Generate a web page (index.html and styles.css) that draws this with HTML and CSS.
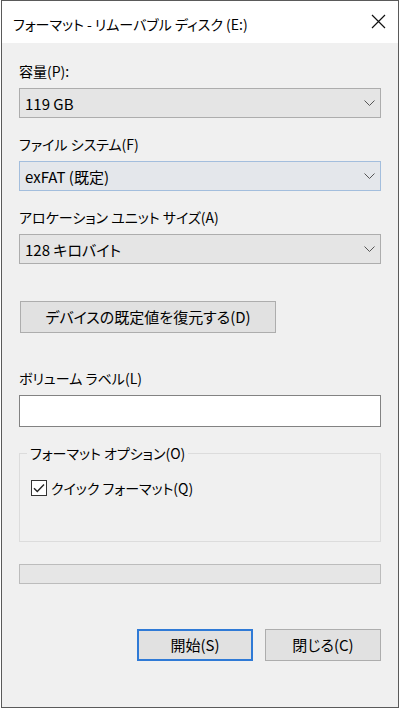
FILE: index.html
```html
<!DOCTYPE html>
<html lang="ja">
<head>
    <meta charset="utf-8">
    <title>フォーマット - リムーバブル ディスク (E:)</title>
    <link rel="stylesheet" href="styles.css">
</head>
<body>
    <div class="window">
        <div class="titlebar">
            <span class="title">フォーマット - リムーバブル ディスク (E:)</span>
            <svg class="close" width="15" height="15" viewBox="0 0 15 15">
                <path d="M1 1L14 14M14 1L1 14" stroke="#111" stroke-width="1.2" fill="none"/>
            </svg>
        </div>

        <div class="content">
            <div class="label">容量(P):</div>
            <div class="combo">
                <span>119 GB</span>
                <svg class="chevron" width="11" height="6" viewBox="0 0 11 6">
                    <path d="M0.5 0.5L5.5 5.5L10.5 0.5" stroke="#555" stroke-width="1" fill="none"/>
                </svg>
            </div>

            <div class="label">ファイル システム(F)</div>
            <div class="combo focused">
                <span>exFAT (既定)</span>
                <svg class="chevron" width="11" height="6" viewBox="0 0 11 6">
                    <path d="M0.5 0.5L5.5 5.5L10.5 0.5" stroke="#555" stroke-width="1" fill="none"/>
                </svg>
            </div>

            <div class="label">アロケーション ユニット サイズ(A)</div>
            <div class="combo">
                <span>128 キロバイト</span>
                <svg class="chevron" width="11" height="6" viewBox="0 0 11 6">
                    <path d="M0.5 0.5L5.5 5.5L10.5 0.5" stroke="#555" stroke-width="1" fill="none"/>
                </svg>
            </div>

            <button class="btn restore">デバイスの既定値を復元する(D)</button>

            <div class="label volume-label">ボリューム ラベル(L)</div>
            <input class="textbox" type="text" value="">

            <fieldset class="group">
                <legend>フォーマット オプション(O)</legend>
                <label class="check-row">
                    <span class="checkbox">
                        <svg width="14" height="14" viewBox="0 0 14 14">
                            <path d="M2 7.2L5.3 10.5L12 3.5" stroke="#222" stroke-width="1.4" fill="none"/>
                        </svg>
                    </span>
                    <span>クイック フォーマット(Q)</span>
                </label>
            </fieldset>

            <div class="progress"></div>

            <div class="actions">
                <button class="btn action default">開始(S)</button>
                <button class="btn action">閉じる(C)</button>
            </div>
        </div>
    </div>
</body>
</html>
```

FILE: styles.css
```css
* {
    margin: 0;
    padding: 0;
    box-sizing: border-box;
}

body {
    background: #fff;
    font-family: "Noto Sans CJK JP", "Noto Sans", sans-serif;
    font-size: 14px;
    font-feature-settings: "palt";
    color: #000;
}

.window {
    margin-left: 1px;
    width: 398px;
    height: 708px;
    border: 1px solid #5a5a5a;
    background: #f0f0f0;
    display: flex;
    flex-direction: column;
}

.titlebar {
    height: 42px;
    background: #fff;
    display: flex;
    align-items: center;
    justify-content: space-between;
    padding: 0 12px 0 11px;
    flex-shrink: 0;
}

.title {
    padding-top: 4px;
}

.close {
    margin-top: -1px;
}

.content {
    padding: 18px 17px 0 17px;
    display: flex;
    flex-direction: column;
}

.label {
    height: 20px;
    line-height: 20px;
    margin-top: 16px;
}

.label:first-child {
    margin-top: 0;
}

.combo {
    height: 30px;
    margin-top: 7px;
    display: flex;
    align-items: center;
    justify-content: space-between;
    padding: 0 5px 0 5px;
    font-size: 15px;
    background: #e5e5e5;
    border: 1px solid #adadad;
}

.combo.focused {
    background: #e4e7eb;
    border-color: #a3bedd;
}

.btn {
    font: inherit;
    font-size: 15px;
    color: #000;
    background: #e1e1e1;
    border: 1px solid #adadad;
    height: 32px;
    line-height: 28px;
    text-align: center;
}

.restore {
    width: 256px;
    margin-top: 37px;
    margin-left: 1px;
}

.volume-label {
    margin-top: 35px;
}

.textbox {
    height: 32px;
    margin-top: 7px;
    background: #fff;
    border: 1px solid #828282;
    font: inherit;
    outline: none;
}

.group {
    margin-top: 16px;
    height: 99px;
    border: 1px solid #dcdcdc;
}

.group legend {
    margin-left: 7px;
    padding: 0 3px;
    line-height: 20px;
}

.check-row {
    display: flex;
    align-items: center;
    gap: 4px;
    margin: 15px 0 0 11px;
    height: 20px;
}

.checkbox {
    width: 16px;
    height: 16px;
    border: 1px solid #333;
    background: #fff;
    display: flex;
    align-items: center;
    justify-content: center;
}

.progress {
    margin-top: 22px;
    height: 20px;
    background: #e6e6e6;
    border: 1px solid #bcbcbc;
}

.actions {
    margin-top: 45px;
    display: flex;
    justify-content: flex-end;
    gap: 12px;
}

.action {
    width: 116px;
}

.action.default {
    border: 2px solid #2f7ad6;
}
```
